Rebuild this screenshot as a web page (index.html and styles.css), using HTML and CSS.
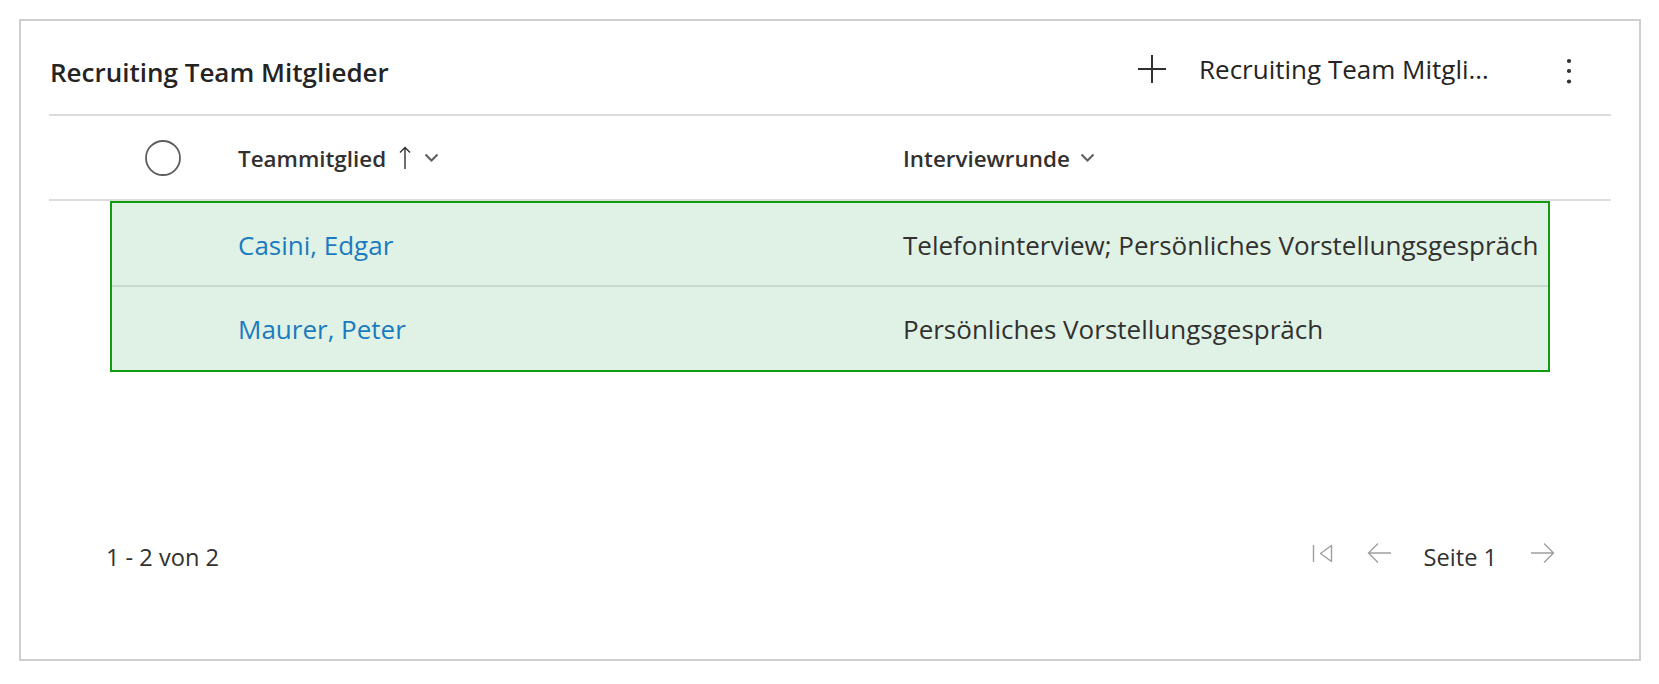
FILE: index.html
```html
<!DOCTYPE html>
<html lang="de">
<head>
<meta charset="utf-8">
<title>Recruiting Team Mitglieder</title>
<link rel="stylesheet" href="styles.css">
</head>
<body>
<section class="card">
  <header class="commandbar">
    <h2 class="title">Recruiting Team Mitglieder</h2>
    <div class="commands">
      <button class="cmd add">
        <svg class="plus" width="30" height="30" viewBox="0 0 30 30"><path d="M15 1V29M1 15H29" stroke="#323130" stroke-width="2" fill="none"/></svg>
        <span class="cmd-label">Recruiting Team Mitglieder</span>
      </button>
      <button class="cmd more" aria-label="Weitere Befehle">
        <svg width="6" height="26" viewBox="0 0 6 26"><circle cx="3" cy="3" r="2.1" fill="#323130"/><circle cx="3" cy="13" r="2.1" fill="#323130"/><circle cx="3" cy="23.5" r="2.1" fill="#323130"/></svg>
      </button>
    </div>
  </header>

  <div class="grid-head">
    <div class="spacer"></div>
    <div class="check-cell">
      <svg width="38" height="38" viewBox="0 0 38 38"><circle cx="19" cy="19" r="17" stroke="#605e5c" stroke-width="1.8" fill="none"/></svg>
    </div>
    <div class="col-head">
      <span>Teammitglied</span>
      <svg class="sort" width="12" height="24" viewBox="0 0 12 24"><path d="M6 1.5V23M1 6.5L6 1.5L11 6.5" stroke="#323130" stroke-width="1.4" fill="none"/></svg>
      <svg class="chev" width="15" height="10" viewBox="0 0 15 10"><path d="M1.5 1.5L7.5 7.5L13.5 1.5" stroke="#605e5c" stroke-width="2" fill="none"/></svg>
    </div>
    <div class="col-head">
      <span>Interviewrunde</span>
      <svg class="chev chev-tight" width="15" height="10" viewBox="0 0 15 10"><path d="M1.5 1.5L7.5 7.5L13.5 1.5" stroke="#605e5c" stroke-width="2" fill="none"/></svg>
    </div>
  </div>

  <div class="rows">
    <div class="row">
      <div class="cell check"></div>
      <div class="cell"><a class="link" href="#">Casini, Edgar</a></div>
      <div class="cell">Telefoninterview; Persönliches Vorstellungsgespräch</div>
    </div>
    <div class="row">
      <div class="cell check"></div>
      <div class="cell"><a class="link" href="#">Maurer, Peter</a></div>
      <div class="cell">Persönliches Vorstellungsgespräch</div>
    </div>
  </div>

  <div class="fill"></div>

  <footer class="footer">
    <span class="count">1 - 2 von 2</span>
    <nav class="pager">
      <svg class="pg first" width="21" height="19" viewBox="0 0 21 19"><path d="M1.5 1V18M19.5 1.5L8.5 9.5L19.5 17.5Z" stroke="#a19f9d" stroke-width="1.4" fill="none" stroke-linejoin="round"/></svg>
      <svg class="pg prev" width="25" height="22" viewBox="0 0 25 22"><path d="M24 11H1.5M11 1.5L1.5 11L11 20.5" stroke="#a19f9d" stroke-width="1.4" fill="none"/></svg>
      <span class="page">Seite 1</span>
      <svg class="pg next" width="25" height="22" viewBox="0 0 25 22"><path d="M1 11H23.5M14 1.5L23.5 11L14 20.5" stroke="#a19f9d" stroke-width="1.4" fill="none"/></svg>
    </nav>
  </footer>
</section>
</body>
</html>
```

FILE: styles.css
```css
* { box-sizing: border-box; }

html, body {
  margin: 0;
  padding: 0;
  background: #ffffff;
}

body {
  font-family: "Open Sans", "Noto Sans", sans-serif;
  color: #323130;
  font-size: 26px;
}

.card {
  margin: 19px 0 0 19px;
  width: 1622px;
  height: 642px;
  border: 2px solid #cfcfcf;
  padding: 0 28px 72px 28px;
  display: flex;
  flex-direction: column;
}

/* command bar */
.commandbar {
  height: 95px;
  padding-top: 9px;
  border-bottom: 2px solid #dcdcdc;
  display: flex;
  align-items: center;
}

.title {
  margin: 0 0 0 1px;
  font-size: 26px;
  font-weight: 600;
  color: #252423;
  white-space: nowrap;
}

.commands {
  margin-left: auto;
  margin-top: -6px;
  display: flex;
  align-items: center;
}

.cmd {
  background: none;
  border: 0;
  padding: 0;
  font: inherit;
  color: #252423;
  display: flex;
  align-items: center;
  cursor: pointer;
}

.plus { display: block; }

.cmd-label {
  margin-left: 32px;
  width: 302px;
  overflow: hidden;
  white-space: nowrap;
  text-overflow: ellipsis;
  font-size: 26px;
  text-align: left;
}

.more {
  margin-left: 65px;
  margin-right: 39px;
  padding-top: 4px;
}

/* header row */
.grid-head {
  height: 85px;
  border-bottom: 2px solid #dcdcdc;
  display: grid;
  grid-template-columns: 61px 103px 665px 1fr;
  align-items: center;
}

.check-cell {
  display: flex;
  justify-content: center;
  padding-left: 2px;
}

.check-cell svg { display: block; }

.col-head {
  padding-left: 25px;
  display: flex;
  align-items: center;
  font-weight: 600;
  font-size: 22.4px;
  color: #323130;
  padding-top: 2px;
}

.sort {
  margin-left: 13px;
  margin-top: -2px;
}

.chev {
  margin-left: 13px;
  margin-top: -2px;
}

.chev-tight { margin-left: 10px; }

/* selected rows */
.rows {
  margin-left: 61px;
  width: 1440px;
  border: 2px solid #0f9d0f;
  background: #e0f2e6;
}

.row {
  height: 83px;
  display: grid;
  grid-template-columns: 101px 665px 1fr;
  align-items: center;
}

.row:first-child {
  height: 84px;
  border-bottom: 2px solid #c9dbcd;
}

.cell {
  padding-left: 25px;
  white-space: nowrap;
  font-size: 26px;
  color: #323130;
  padding-top: 1px;
}

.cell.check { padding: 0; }

.link {
  color: #1b7bbf;
  text-decoration: none;
}

.fill { flex: 1; }

/* footer */
.footer {
  height: 60px;
  display: flex;
  align-items: center;
  justify-content: space-between;
  padding: 0 56px 0 57px;
  font-size: 23.6px;
  color: #323130;
}

.pager {
  display: flex;
  align-items: center;
}

.pg { display: block; margin-top: -8px; }

.prev { margin-left: 34px; }

.page { margin-left: 32px; }

.next { margin-left: 33px; }
```
